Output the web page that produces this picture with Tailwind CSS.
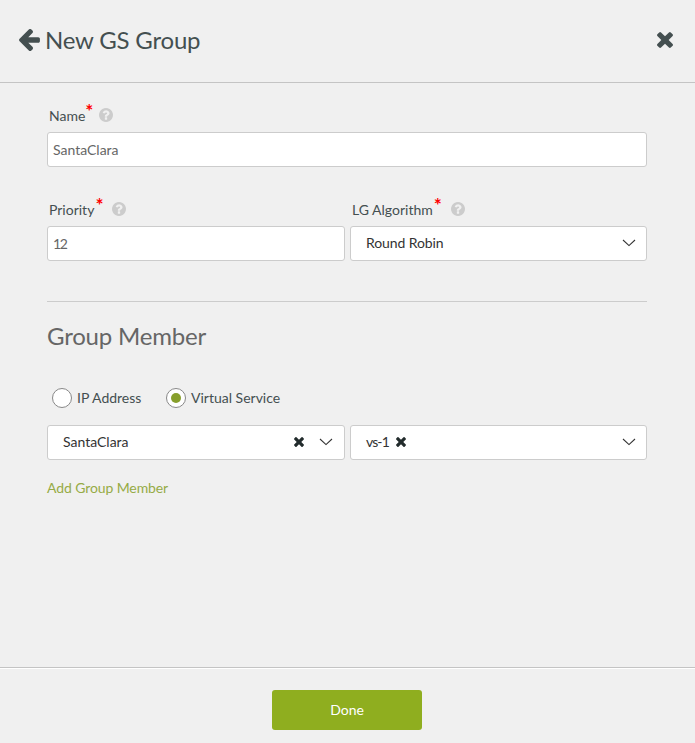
<!DOCTYPE html>
<html lang="en">
<head>
<meta charset="utf-8">
<title>New GS Group</title>
<script src="https://cdn.jsdelivr.net/npm/@tailwindcss/browser@4"></script>
</head>
<body class="bg-[#f0f0f0] font-[Lato,sans-serif] text-[14px] text-[#444f50]">
<svg class="hidden">
  <symbol id="times" viewBox="302 366 1188 1188"><path d="M1490 1322q0 40-28 68l-136 136q-28 28-68 28t-68-28l-294-294-294 294q-28 28-68 28t-68-28l-136-136q-28-28-28-68t28-68l294-294-294-294q-28-28-28-68t28-68l136-136q28-28 68-28t68 28l294 294 294-294q28-28 68-28t68 28l136 136q28 28 28 68t-28 68l-294 294 294 294q28 28 28 68z"/></symbol>
  <symbol id="help" viewBox="128 128 1536 1536"><path d="M1024 1376v-192q0-14-9-23t-23-9h-192q-14 0-23 9t-9 23v192q0 14 9 23t23 9h192q14 0 23-9t9-23zm256-672q0-88-55.5-163t-138.5-116-170-41q-243 0-371 213-15 24 8 42l132 100q7 6 19 6 16 0 25-12 53-68 86-92 34-24 86-24 48 0 85.5 26t37.5 59q0 38-20 61t-68 45q-63 28-115.5 86.5t-52.5 125.5v36q0 14 9 23t23 9h192q14 0 23-9t9-23q0-19 21.5-49.5t54.5-49.5q32-18 49-28.5t46-35 44.5-48 28-60.5 12.5-81zm384 192q0 209-103 385.5t-279.5 279.5-385.5 103-385.5-103-279.5-279.5-103-385.5 103-385.5 279.5-279.5 385.5-103 385.5 103 279.5 279.5 103 385.5z"/></symbol>
  <symbol id="chevron" viewBox="0 0 14 8"><path d="M1 1l6 5.6L13 1" fill="none" stroke="currentColor" stroke-width="1.1"/></symbol>
</svg>
<div class="flex h-[743px] w-[695px] flex-col">
  <header class="flex h-[83px] shrink-0 items-start border-b border-[#c4c4c4] pt-[24px] pr-[22px] pl-[19px]">
    <svg class="mt-[5px] h-[22px] w-[21px] fill-[#444f50]" viewBox="192 185 1472 1554"><path d="M1664 896v128q0 53-32.5 90.5t-84.5 37.5h-704l293 294q38 36 38 90t-38 90l-75 76q-37 37-90 37-52 0-91-37l-651-652q-37-37-37-90 0-52 37-91l651-650q38-38 91-38 52 0 90 38l75 74q38 38 38 91t-38 91l-293 293h704q52 0 84.5 37.5t32.5 90.5z"/></svg>
    <h1 class="ml-[5px] text-[24px] leading-[32px] tracking-[-0.2px]">New GS Group</h1>
    <svg class="mt-[8px] ml-auto size-[16px] fill-[#444f50]"><use href="#times"/></svg>
  </header>
  <main class="flex-1 px-[47px] pt-[22px] pr-[48px]">
    <div class="flex h-[27px] pl-[2px]">
      <label class="mt-[1px] leading-[20px]">Name</label>
      <span class="-mt-[4px] w-[8px] text-[19px] leading-[20px] font-bold text-[#ff0000]">*</span>
      <svg class="mt-[3px] ml-[6px] size-[14px] fill-[#cccccc]"><use href="#help"/></svg>
    </div>
    <div class="flex h-[35px] items-center rounded-[3px] border border-[#cccccc] bg-white px-[5px] text-[#666666]"><span>SantaClara</span></div>
    <div class="mt-[32px] grid grid-cols-[298px_297px] gap-x-[5px]">
      <div class="flex h-[27px] pl-[2px]">
        <label class="mt-[1px] leading-[20px]">Priority</label>
        <span class="-mt-[4px] ml-[1px] w-[8px] text-[19px] leading-[20px] font-bold text-[#ff0000]">*</span>
        <svg class="mt-[3px] ml-[9px] size-[14px] fill-[#cccccc]"><use href="#help"/></svg>
      </div>
      <div class="flex h-[27px] pl-[2px]">
        <label class="mt-[1px] leading-[20px]">LG Algorithm</label>
        <span class="-mt-[4px] ml-[1px] w-[8px] text-[19px] leading-[20px] font-bold text-[#ff0000]">*</span>
        <svg class="mt-[3px] ml-[9px] size-[14px] fill-[#cccccc]"><use href="#help"/></svg>
      </div>
      <div class="flex h-[35px] items-center rounded-[3px] border border-[#cccccc] bg-white px-[5px] text-[#666666]"><span class="tracking-[-1.4px]">12</span></div>
      <div class="flex h-[35px] items-center rounded-[3px] border border-[#cccccc] bg-white pr-[10px] pb-[2px] pl-[15px] text-[#333333]">
        <span class="tracking-[-0.1px]">Round Robin</span>
        <svg class="ml-auto h-[8px] w-[14px]"><use href="#chevron"/></svg>
      </div>
    </div>
    <hr class="mt-[40px] border-[#cccccc]">
    <h2 class="mt-[18px] text-[24px] leading-[32px] tracking-[-0.2px] text-[#666666]">Group Member</h2>
    <div class="mt-[36px] flex h-[20px] items-center pl-[5px]">
      <span class="size-[20px] rounded-full border border-[#888888] bg-white"></span>
      <span class="-mt-[2px] ml-[5px] w-[89px]">IP Address</span>
      <span class="flex size-[20px] items-center justify-center rounded-full border border-[#888888] bg-white"><span class="size-[10px] rounded-full bg-[#879f2c]"></span></span>
      <span class="-mt-[2px] ml-[5px]">Virtual Service</span>
    </div>
    <div class="mt-[17px] grid grid-cols-[298px_297px] gap-x-[5px] text-[#333333]">
      <div class="flex h-[35px] items-center rounded-[3px] border border-[#cccccc] bg-white pr-[11px] pb-[2px] pl-[15px]">
        <span>SantaClara</span>
        <svg class="ml-auto size-[10px] fill-[#222b2c]"><use href="#times"/></svg>
        <svg class="ml-[15px] h-[8px] w-[14px]"><use href="#chevron"/></svg>
      </div>
      <div class="flex h-[35px] items-center rounded-[3px] border border-[#cccccc] bg-white pr-[10px] pb-[2px] pl-[15px]">
        <span class="w-[22px] tracking-[-0.9px] whitespace-nowrap">vs-1</span>
        <svg class="ml-[8px] size-[10px] fill-[#222b2c]"><use href="#times"/></svg>
        <svg class="ml-auto h-[8px] w-[14px]"><use href="#chevron"/></svg>
      </div>
    </div>
    <a class="mt-[18px] block leading-[20px] tracking-[-0.1px] text-[#96ab46]">Add Group Member</a>
  </main>
  <footer class="flex h-[76px] shrink-0 justify-center border-t border-[#c4c4c4]">
    <div class="flex w-full justify-center border-t border-white pt-[21px] pr-px">
      <button class="h-[40px] w-[150px] rounded-[3px] bg-[#8fae1f] pb-[2px] text-white">Done</button>
    </div>
  </footer>
</div>
</body>
</html>
